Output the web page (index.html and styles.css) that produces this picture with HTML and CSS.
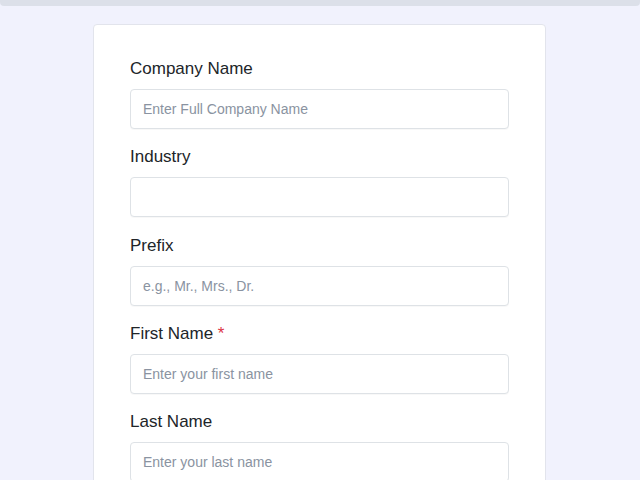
FILE: index.html
```html
<!DOCTYPE html>
<html lang="en">
<head>
<meta charset="utf-8">
<title>Form</title>
<link rel="stylesheet" href="styles.css">
</head>
<body>
<div class="topbar"></div>
<main class="card">
  <div class="field">
    <label class="label" for="company">Company Name</label>
    <input class="input" id="company" type="text" placeholder="Enter Full Company Name">
  </div>
  <div class="field">
    <label class="label" for="industry">Industry</label>
    <input class="input" id="industry" type="text">
  </div>
  <div class="field">
    <label class="label" for="prefix">Prefix</label>
    <input class="input" id="prefix" type="text" placeholder="e.g., Mr., Mrs., Dr.">
  </div>
  <div class="field">
    <label class="label" for="first">First Name <span class="req">*</span></label>
    <input class="input" id="first" type="text" placeholder="Enter your first name">
  </div>
  <div class="field">
    <label class="label" for="last">Last Name</label>
    <input class="input" id="last" type="text" placeholder="Enter your last name">
  </div>
</main>
</body>
</html>
```

FILE: styles.css
```css
html, body {
  margin: 0;
  padding: 0;
}
body {
  background: #f1f2fd;
  font-family: "Liberation Sans", Arial, sans-serif;
  color: #212529;
  height: 480px;
  overflow: hidden;
}
.topbar {
  height: 6px;
  background: #dce0e9;
  border-radius: 0 0 4px 4px;
}
.card {
  box-sizing: border-box;
  width: 453px;
  margin: 18px 0 0 93px;
  background: #ffffff;
  border: 1px solid #e2e4ec;
  border-radius: 4px;
  padding: 32px 36px 40px 36px;
  display: flex;
  flex-direction: column;
  gap: 16.33px;
}
.field {
  display: flex;
  flex-direction: column;
  gap: 8px;
}
.label {
  font-size: 17px;
  line-height: 24px;
  color: #212529;
}
.req {
  color: #dc3545;
}
.input {
  box-sizing: border-box;
  height: 40px;
  width: 100%;
  border: 1px solid #dee2e6;
  border-radius: 4px;
  padding: 0 12px;
  font-family: "Liberation Sans", Arial, sans-serif;
  font-size: 14px;
  color: #212529;
  background: #fff;
  box-shadow: 0 1px 1px rgba(0, 0, 0, 0.03);
  outline: none;
}
.input::placeholder {
  color: #8a93a1;
  opacity: 1;
}
```
